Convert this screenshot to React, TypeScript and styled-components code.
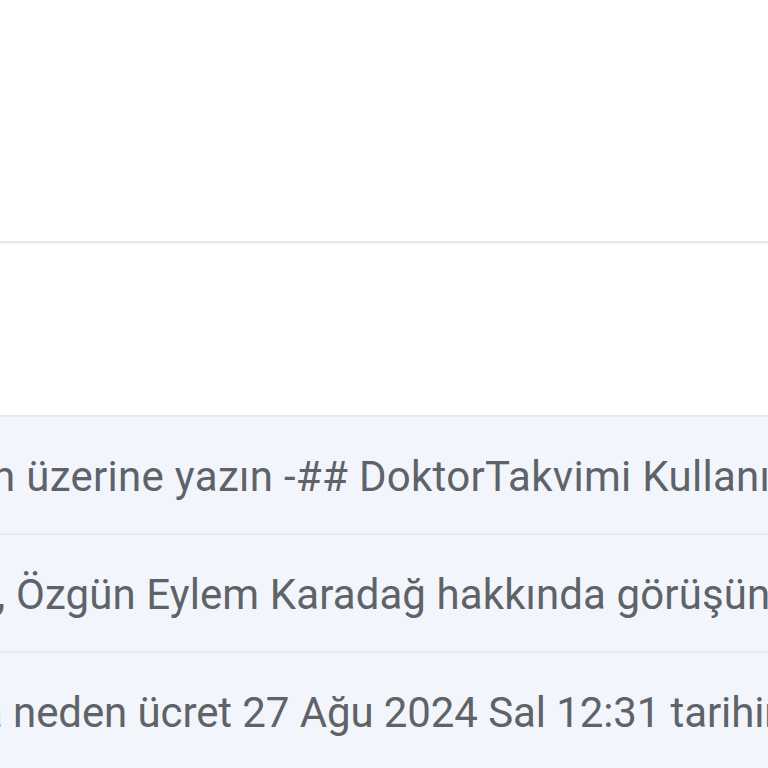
import styled, { createGlobalStyle } from "styled-components";

const GlobalStyle = createGlobalStyle`
  html, body {
    margin: 0;
    padding: 0;
    background: #ffffff;
  }
  body {
    font-family: Roboto, "Liberation Sans", Arial, sans-serif;
  }
`;

const Page = styled.div`
  width: 768px;
  height: 768px;
  overflow: hidden;
  display: flex;
  flex-direction: column;
  background: #ffffff;
`;

const Header = styled.div`
  height: 241px;
  flex-shrink: 0;
  border-bottom: 2px solid #e9e9e9;
  box-shadow: 0 1px 2px rgba(0, 0, 0, 0.03);
`;

const Gap = styled.div`
  height: 172px;
  flex-shrink: 0;
`;

const MailList = styled.div`
  display: flex;
  flex-direction: column;
`;

const MailRow = styled.div`
  height: 116px;
  flex-shrink: 0;
  border-top: 2px solid #e6e9ee;
  background: #f2f6fc;
  display: flex;
  align-items: center;
  overflow: hidden;
`;

const Snippet = styled.span<{ $shift: number; $spacing: number }>`
  margin-left: ${(p) => p.$shift}px;
  margin-top: 3px;
  white-space: nowrap;
  font-size: 42px;
  color: #5f6368;
  letter-spacing: ${(p) => p.$spacing}px;
`;

const mails = [
  { text: "n üzerine yazın -## DoktorTakvimi Kullanıcısı", shift: -8, spacing: 0.3 },
  { text: ", Özgün Eylem Karadağ hakkında görüşünüzü", shift: -3, spacing: 0.1 },
  { text: "a neden ücret 27 Ağu 2024 Sal 12:31 tarihinde", shift: -20, spacing: -0.1 },
];

function App() {
  return (
    <>
      <GlobalStyle />
      <Page>
        <Header />
        <Gap />
        <MailList>
          {mails.map((m) => (
            <MailRow key={m.text}>
              <Snippet $shift={m.shift} $spacing={m.spacing}>
                {m.text}
              </Snippet>
            </MailRow>
          ))}
        </MailList>
      </Page>
    </>
  );
}

export default App;
